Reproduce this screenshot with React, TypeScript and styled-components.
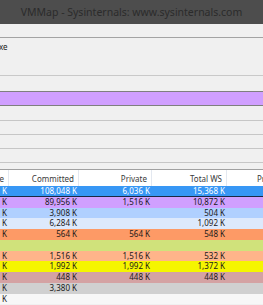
import styled, { createGlobalStyle } from "styled-components";

const GlobalStyle = createGlobalStyle`
  html, body {
    margin: 0;
    padding: 0;
    background: #f0f0f0;
    overflow: hidden;
  }
  body {
    font-family: "Noto Sans", "Open Sans", sans-serif;
  }
`;

const Window = styled.div`
  width: 263px;
  height: 305px;
  display: flex;
  flex-direction: column;
  background: #f0f0f0;
  overflow: hidden;
`;

const TitleBar = styled.div`
  height: 24px;
  flex: none;
  background: #4d4d4d;
  color: #2b2b2b;
  font-size: 10.5px;
  display: flex;
  align-items: center;
  justify-content: center;
  white-space: nowrap;
`;

const MenuStrip = styled.div`
  height: 13px;
  flex: none;
  border-bottom: 1px solid #a3a3a3;
`;

const ProcessBox = styled.div`
  height: 38px;
  flex: none;
  border-bottom: 1px solid #c9c9c9;
  padding: 3px 0 0 0;
  box-sizing: border-box;
  font-size: 8px;
  color: #1a1a1a;
`;

const ProcessName = styled.span`
  display: inline-block;
  margin-left: -7.5px;
  white-space: nowrap;
`;

const Gap = styled.div<{ $h: number }>`
  height: ${(p) => p.$h}px;
  flex: none;
`;

const Bar = styled.div<{ $fill?: string; $edge: string; $h: number }>`
  height: ${(p) => p.$h}px;
  flex: none;
  box-sizing: border-box;
  background: ${(p) => p.$fill ?? "transparent"};
  border-top: ${(p) => (p.$fill ? `1px solid ${p.$edge}` : "none")};
  border-bottom: 1px solid ${(p) => p.$edge};
`;

const columns = [
  { label: "Size", width: 9 },
  { label: "Committed", width: 70 },
  { label: "Private", width: 73 },
  { label: "Total WS", width: 75 },
  { label: "Private WS", width: 75 },
];

const ListHeader = styled.div`
  display: flex;
  height: 16px;
  flex: none;
  background: #ffffff;
  border-top: 1px solid #a0a0a0;
  font-size: 8px;
  color: #3a3a3a;
`;

const HeaderCell = styled.div<{ $w: number }>`
  width: ${(p) => p.$w}px;
  flex: none;
  box-sizing: border-box;
  border-right: 1px solid #e3e8f0;
  padding-right: 4px;
  display: flex;
  align-items: center;
  justify-content: flex-end;
  white-space: nowrap;
  overflow: visible;
`;

const Row = styled.div<{ $bg: string; $fg: string; $line?: boolean }>`
  display: flex;
  height: 10.75px;
  flex: none;
  background: ${(p) => p.$bg};
  color: ${(p) => p.$fg};
  font-size: 8px;
  line-height: 10.75px;
  box-shadow: ${(p) => (p.$line ? "inset 0 -1px 0 #1b2a44" : "none")};
`;

const Cell = styled.div<{ $w: number }>`
  width: ${(p) => p.$w}px;
  flex: none;
  box-sizing: border-box;
  padding-right: 2px;
  text-align: right;
  white-space: nowrap;
`;

type Item = { bg: string; fg?: string; line?: boolean; v: string[] };

const items: Item[] = [
  { bg: "#3797f5", fg: "#ffffff", line: true, v: ["K", "108,048 K", "6,036 K", "15,368 K", ""] },
  { bg: "#d0a0ff", v: ["K", "89,956 K", "1,516 K", "10,872 K", ""] },
  { bg: "#b0d0ff", v: ["K", "3,908 K", "", "504 K", ""] },
  { bg: "#dde9fc", v: ["K", "6,284 K", "", "1,092 K", ""] },
  { bg: "#fd9a66", v: ["K", "564 K", "564 K", "548 K", ""] },
  { bg: "#d0e27b", v: ["", "", "", "", ""] },
  { bg: "#ffb48a", v: ["K", "1,516 K", "1,516 K", "532 K", ""] },
  { bg: "#f5f500", v: ["K", "1,992 K", "1,992 K", "1,372 K", ""] },
  { bg: "#d4a2a3", v: ["K", "448 K", "448 K", "448 K", ""] },
  { bg: "#d0d0d0", v: ["K", "3,380 K", "", "", ""] },
  { bg: "#f7f7f7", v: ["K", "", "", "", ""] },
];

export default function App() {
  return (
    <Window>
      <GlobalStyle />
      <TitleBar>VMMap - Sysinternals: www.sysinternals.com</TitleBar>
      <MenuStrip />
      <ProcessBox>
        <ProcessName>.exe</ProcessName>
      </ProcessBox>
      <Gap $h={15} />
      <Bar $h={15} $fill="#d09fff" $edge="#7f7f7f" />
      <Bar $h={15} $edge="#c6c6c6" />
      <Bar $h={14} $edge="#c6c6c6" />
      <Bar $h={14} $edge="#c6c6c6" />
      <Bar $h={14} $edge="#c6c6c6" />
      <Gap $h={6} />
      <ListHeader>
        {columns.map((c) => (
          <HeaderCell key={c.label} $w={c.width}>
            {c.label}
          </HeaderCell>
        ))}
      </ListHeader>
      {items.map((it, i) => (
        <Row key={i} $bg={it.bg} $fg={it.fg ?? "#1a1a1a"} $line={it.line}>
          {columns.map((c, j) => (
            <Cell key={c.label} $w={c.width}>
              {it.v[j]}
            </Cell>
          ))}
        </Row>
      ))}
    </Window>
  );
}
